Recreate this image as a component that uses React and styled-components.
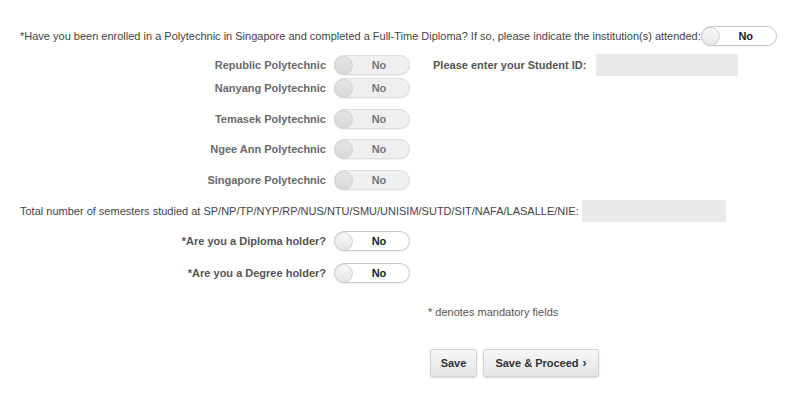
import styled, { createGlobalStyle } from "styled-components";

const GlobalStyle = createGlobalStyle`
  body {
    margin: 0;
    background: #ffffff;
    font-family: "Liberation Sans", Arial, sans-serif;
  }
`;

const polytechnics = [
  { name: "Republic Polytechnic", gap: 0, studentId: true },
  { name: "Nanyang Polytechnic", gap: 1 },
  { name: "Temasek Polytechnic", gap: 9 },
  { name: "Ngee Ann Polytechnic", gap: 8 },
  { name: "Singapore Polytechnic", gap: 9 },
];

const Toggle = ({ disabled }) => (
  <Switch $disabled={disabled}>
    <Knob $disabled={disabled} />
    <SwitchText $disabled={disabled}>No</SwitchText>
  </Switch>
);

const App = () => {
  return (
    <Page>
      <GlobalStyle />
      <QuestionRow>
        <Question>
          *Have you been enrolled in a Polytechnic in Singapore and completed a
          Full-Time Diploma? If so, please indicate the institution(s) attended:
        </Question>
        <Toggle />
      </QuestionRow>

      <PolyList>
        {polytechnics.map((p) => (
          <Row key={p.name} $gap={p.gap}>
            <Label $muted>{p.name}</Label>
            <Toggle disabled />
            {p.studentId && (
              <StudentId>
                <Label as="span" $auto>
                  Please enter your Student ID:
                </Label>
                <TextBox $width={142} />
              </StudentId>
            )}
          </Row>
        ))}
      </PolyList>

      <SemesterRow>
        <Question>
          Total number of semesters studied at
          SP/NP/TP/NYP/RP/NUS/NTU/SMU/UNISIM/SUTD/SIT/NAFA/LASALLE/NIE:
        </Question>
        <TextBox $width={144} />
      </SemesterRow>

      <Row $gap={8}>
        <Label>*Are you a Diploma holder?</Label>
        <Toggle />
      </Row>
      <Row $gap={10}>
        <Label>*Are you a Degree holder?</Label>
        <Toggle />
      </Row>

      <Footer>
        <Note>* denotes mandatory fields</Note>
        <Buttons>
          <Button $width={47}>Save</Button>
          <Button $width={116}>
            Save &amp; Proceed <Arrow>›</Arrow>
          </Button>
        </Buttons>
      </Footer>
    </Page>
  );
};

export default App;

const Page = styled.div`
  width: 800px;
  height: 406px;
  padding: 26px 0 0 20px;
  box-sizing: border-box;
  color: #444;
`;

const QuestionRow = styled.div`
  display: flex;
  align-items: center;
  height: 20px;
`;

const Question = styled.span`
  font-size: 11px;
  color: #444;
  white-space: nowrap;
`;

const PolyList = styled.div`
  display: flex;
  flex-direction: column;
  margin-top: 8px;
`;

const Row = styled.div`
  display: flex;
  align-items: center;
  height: 22px;
  margin-top: ${(p) => p.$gap || 0}px;
`;

const Label = styled.label`
  width: ${(p) => (p.$auto ? "auto" : "314px")};
  padding-right: ${(p) => (p.$auto ? "0" : "8px")};
  box-sizing: border-box;
  text-align: right;
  font-size: 11px;
  font-weight: 700;
  color: ${(p) => (p.$muted ? "#6a6a6a" : "#555")};
  white-space: nowrap;
`;

const Switch = styled.div`
  display: flex;
  align-items: center;
  width: 76px;
  height: 20px;
  box-sizing: border-box;
  border: 1px solid ${(p) => (p.$disabled ? "#dcdcdc" : "#c8c8c8")};
  border-radius: 10px;
  background: ${(p) => (p.$disabled ? "#efefef" : "#fff")};
  box-shadow: 0 1px 1px rgba(0, 0, 0, 0.06);
`;

const Knob = styled.span`
  width: 19px;
  height: 19px;
  border-radius: 50%;
  background: ${(p) =>
    p.$disabled
      ? "linear-gradient(#e4e4e4, #d8d8d8)"
      : "linear-gradient(#f8f8f8, #e6e6e6)"};
  border: 1px solid ${(p) => (p.$disabled ? "#d2d2d2" : "#d0d0d0")};
  box-sizing: border-box;
  flex-shrink: 0;
  margin-left: -1px;
`;

const SwitchText = styled.span`
  flex: 1;
  text-align: center;
  font-size: 11px;
  font-weight: 700;
  color: ${(p) => (p.$disabled ? "#777" : "#222")};
  padding-right: 4px;
`;

const StudentId = styled.div`
  display: flex;
  align-items: center;
  gap: 10px;
  margin-left: 23px;
`;

const TextBox = styled.div`
  width: ${(p) => p.$width}px;
  height: 22px;
  background: #e9e9eb;
  border-radius: 1px;
`;

const SemesterRow = styled.div`
  display: flex;
  align-items: center;
  gap: 3px;
  height: 22px;
  margin-top: 9px;
`;

const Footer = styled.div`
  margin-left: 408px;
  margin-top: 21px;
`;

const Note = styled.div`
  font-size: 11px;
  color: #555;
  height: 14px;
  line-height: 14px;
`;

const Buttons = styled.div`
  display: flex;
  gap: 6px;
  margin-top: 30px;
  margin-left: 2px;
`;

const Button = styled.button`
  width: ${(p) => p.$width}px;
  height: 28px;
  padding: 0;
  font-family: inherit;
  font-size: 11px;
  font-weight: 700;
  color: #333;
  background: linear-gradient(#f7f7f7, #e4e4e4);
  border: 1px solid #d2d2d2;
  border-radius: 2px;
  box-shadow: 0 1px 2px rgba(0, 0, 0, 0.15);
`;

const Arrow = styled.span`
  font-size: 12px;
  margin-left: 1px;
`;
